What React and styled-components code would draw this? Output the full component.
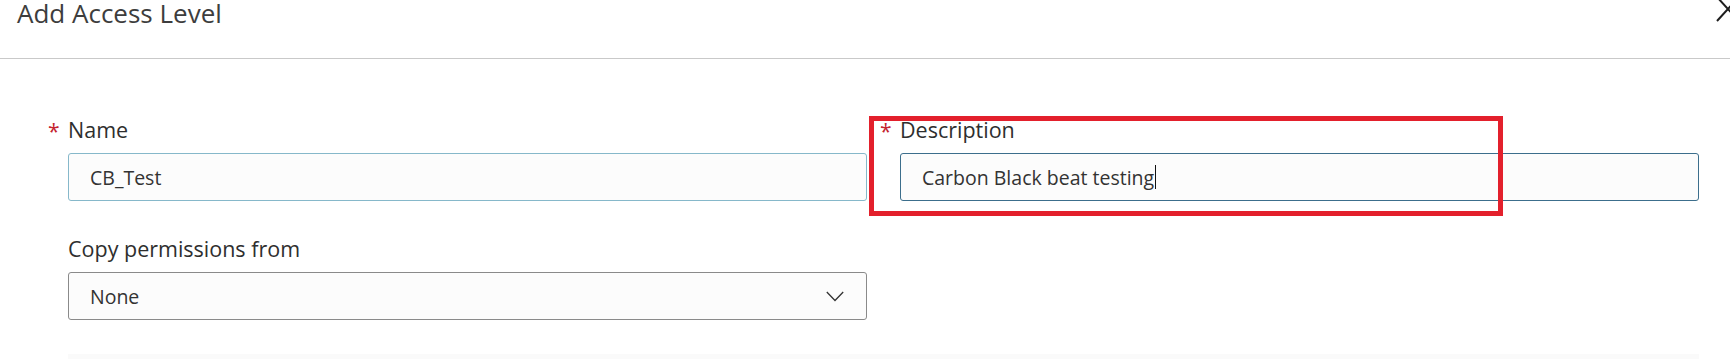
import React from "react";
import styled, { createGlobalStyle } from "styled-components";

const GlobalStyle = createGlobalStyle`
  html, body {
    margin: 0;
    padding: 0;
    background: #ffffff;
  }
  body {
    font-family: "Open Sans", "Noto Sans", sans-serif;
    color: #2b2b2b;
    overflow: hidden;
  }
`;

const Dialog = styled.div`
  position: relative;
  width: 1730px;
  height: 359px;
  overflow: hidden;
  background: #ffffff;
`;

const Header = styled.header`
  height: 58px;
  border-bottom: 1px solid #c9c9c9;
  display: flex;
  align-items: flex-start;
  padding-left: 17px;
`;

const Title = styled.h1`
  margin: 0;
  margin-top: -4px;
  font-size: 26px;
  line-height: 34px;
  font-weight: 400;
  color: #3d3d3d;
`;

const CloseButton = styled.button`
  position: absolute;
  top: -7px;
  right: -13px;
  width: 30px;
  height: 40px;
  padding: 0;
  border: none;
  background: transparent;
  color: #222;
`;

const Body = styled.div`
  padding: 58px 31px 0 68px;
`;

const Grid = styled.div`
  display: grid;
  grid-template-columns: 799px 799px;
  column-gap: 33px;
  row-gap: 35px;
`;

const Field = styled.div`
  display: flex;
  flex-direction: column;
  gap: 10px;
`;

const Label = styled.label`
  position: relative;
  font-size: 21.5px;
  line-height: 26px;
  color: #2e2e2e;
`;

const Required = styled.span`
  position: absolute;
  left: -20px;
  top: 1px;
  color: #c4232f;
  font-size: 21px;
`;

const Input = styled.div`
  box-sizing: border-box;
  height: 48px;
  display: flex;
  align-items: center;
  padding: 0 22px 0 21px;
  border: 1px solid ${({ $focused }) => ($focused ? "#3c6e8c" : "#86b8ca")};
  border-radius: 3px;
  background: #fcfcfc;
  font-size: 19.5px;
  color: #333333;
`;

const Select = styled(Input)`
  border-color: #8a8a8a;
  justify-content: space-between;
  padding-right: 22px;
`;

const Caret = styled.span`
  display: inline-block;
  width: 1px;
  height: 24px;
  margin-left: 1px;
  background: #111;
`;

const Highlight = styled.div`
  position: absolute;
  left: 869px;
  top: 116px;
  width: 634px;
  height: 100px;
  box-sizing: border-box;
  border: 5px solid #e3202c;
  pointer-events: none;
`;

const Footer = styled.div`
  margin: 34px 31px 0 68px;
  height: 40px;
  background: #fafafa;
`;

const Chevron = () => (
  <svg width="18" height="11" viewBox="0 0 18 11" fill="none">
    <path d="M0.8 1 L9 9.5 L17.2 1" stroke="#333" strokeWidth="1.3" />
  </svg>
);

const CloseIcon = () => (
  <svg width="30" height="40" viewBox="0 0 30 40" fill="none">
    <path d="M4 4 L26 28 M26 4 L4 28" stroke="#1e1e1e" strokeWidth="2" />
  </svg>
);

export default function App() {
  return (
    <>
      <GlobalStyle />
      <Dialog>
        <Header>
          <Title>Add Access Level</Title>
        </Header>
        <CloseButton aria-label="Close">
          <CloseIcon />
        </CloseButton>
        <Body>
          <Grid>
            <Field>
              <Label>
                <Required>*</Required>
                Name
              </Label>
              <Input>CB_Test</Input>
            </Field>
            <Field>
              <Label>
                <Required>*</Required>
                Description
              </Label>
              <Input $focused>
                Carbon Black beat testing
                <Caret />
              </Input>
            </Field>
            <Field>
              <Label>Copy permissions from</Label>
              <Select>
                None
                <Chevron />
              </Select>
            </Field>
          </Grid>
        </Body>
        <Footer />
        <Highlight />
      </Dialog>
    </>
  );
}
